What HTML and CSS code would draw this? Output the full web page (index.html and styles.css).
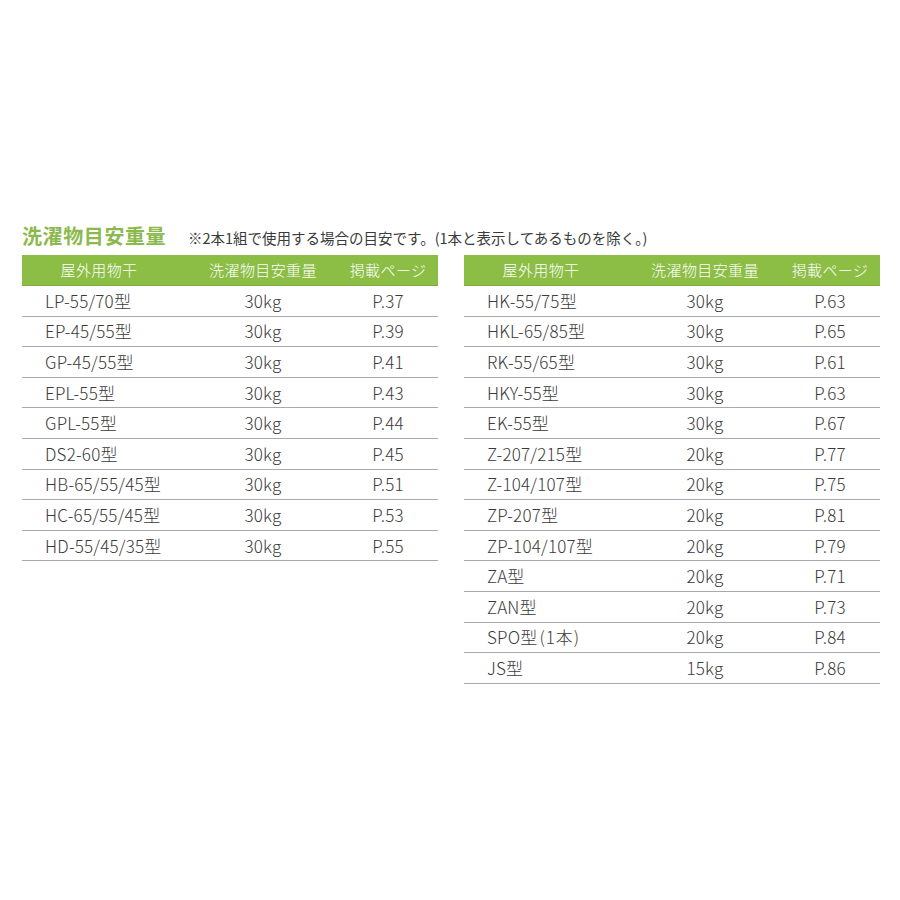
FILE: index.html
```html
<!DOCTYPE html>
<html lang="ja">
<head>
<meta charset="utf-8">
<link rel="stylesheet" href="styles.css">
</head>
<body>
<div class="page">
  <div class="heading">
    <h1 class="title">洗濯物目安重量</h1>
    <p class="note">※2本1組で使用する場合の目安です。(1本と表示してあるものを除く。)</p>
  </div>
  <div class="tables">
    <div class="table">
      <div class="row head"><span class="c1">屋外用物干</span><span class="c2">洗濯物目安重量</span><span class="c3">掲載ページ</span></div>
      <div class="row"><span class="c1">LP-55/70型</span><span class="c2">30kg</span><span class="c3">P.37</span></div>
      <div class="row"><span class="c1">EP-45/55型</span><span class="c2">30kg</span><span class="c3">P.39</span></div>
      <div class="row"><span class="c1">GP-45/55型</span><span class="c2">30kg</span><span class="c3">P.41</span></div>
      <div class="row"><span class="c1">EPL-55型</span><span class="c2">30kg</span><span class="c3">P.43</span></div>
      <div class="row"><span class="c1">GPL-55型</span><span class="c2">30kg</span><span class="c3">P.44</span></div>
      <div class="row"><span class="c1">DS2-60型</span><span class="c2">30kg</span><span class="c3">P.45</span></div>
      <div class="row"><span class="c1">HB-65/55/45型</span><span class="c2">30kg</span><span class="c3">P.51</span></div>
      <div class="row"><span class="c1">HC-65/55/45型</span><span class="c2">30kg</span><span class="c3">P.53</span></div>
      <div class="row"><span class="c1">HD-55/45/35型</span><span class="c2">30kg</span><span class="c3">P.55</span></div>
    </div>
    <div class="table">
      <div class="row head"><span class="c1">屋外用物干</span><span class="c2">洗濯物目安重量</span><span class="c3">掲載ページ</span></div>
      <div class="row"><span class="c1">HK-55/75型</span><span class="c2">30kg</span><span class="c3">P.63</span></div>
      <div class="row"><span class="c1">HKL-65/85型</span><span class="c2">30kg</span><span class="c3">P.65</span></div>
      <div class="row"><span class="c1">RK-55/65型</span><span class="c2">30kg</span><span class="c3">P.61</span></div>
      <div class="row"><span class="c1">HKY-55型</span><span class="c2">30kg</span><span class="c3">P.63</span></div>
      <div class="row"><span class="c1">EK-55型</span><span class="c2">30kg</span><span class="c3">P.67</span></div>
      <div class="row"><span class="c1">Z-207/215型</span><span class="c2">20kg</span><span class="c3">P.77</span></div>
      <div class="row"><span class="c1">Z-104/107型</span><span class="c2">20kg</span><span class="c3">P.75</span></div>
      <div class="row"><span class="c1">ZP-207型</span><span class="c2">20kg</span><span class="c3">P.81</span></div>
      <div class="row"><span class="c1">ZP-104/107型</span><span class="c2">20kg</span><span class="c3">P.79</span></div>
      <div class="row"><span class="c1">ZA型</span><span class="c2">20kg</span><span class="c3">P.71</span></div>
      <div class="row"><span class="c1">ZAN型</span><span class="c2">20kg</span><span class="c3">P.73</span></div>
      <div class="row"><span class="c1">SPO型<span class="paren">(1本)</span></span><span class="c2">20kg</span><span class="c3">P.84</span></div>
      <div class="row"><span class="c1">JS型</span><span class="c2">15kg</span><span class="c3">P.86</span></div>
    </div>
  </div>
</div>
</body>
</html>
```

FILE: styles.css
```css
html, body {
  margin: 0;
  padding: 0;
  background: #ffffff;
}

body {
  font-family: "Noto Sans CJK JP", "Noto Sans", sans-serif;
  font-weight: 300;
  color: #3a3a3a;
}

.page {
  padding: 222px 0 0 22px;
}

.heading {
  display: flex;
  align-items: baseline;
  height: 33px;
}

.title {
  margin: 0;
  font-size: 20px;
  line-height: 28px;
  font-weight: 700;
  color: #8bb94c;
  letter-spacing: 0.6px;
  width: 166px;
}

.note {
  margin: 0;
  font-size: 14.5px;
  line-height: 20px;
  font-weight: 400;
  color: #3a3a3a;
  white-space: nowrap;
}

.tables {
  display: flex;
  gap: 26px;
  align-items: flex-start;
}

.table {
  width: 416px;
}

.row {
  display: grid;
  grid-template-columns: 154px 174px 76px;
  height: 30.6px;
  align-items: center;
  border-bottom: 1.6px solid #a9a9a9;
  box-sizing: border-box;
  font-size: 17px;
  line-height: 20px;
  letter-spacing: 0.2px;
  white-space: nowrap;
}

.row .c1 {
  padding-left: 23px;
}

.row .c2,
.row .c3 {
  display: flex;
  justify-content: center;
}

.paren {
  margin-left: 2px;
  letter-spacing: 1px;
}

.row.head {
  background: #8cbd45;
  color: #ffffff;
  border-bottom: 1px solid #7eab3d;
  height: 31px;
  font-size: 15px;
  letter-spacing: 0.4px;
}

.row.head .c1 {
  padding-left: 0;
  display: flex;
  justify-content: center;
}
```
